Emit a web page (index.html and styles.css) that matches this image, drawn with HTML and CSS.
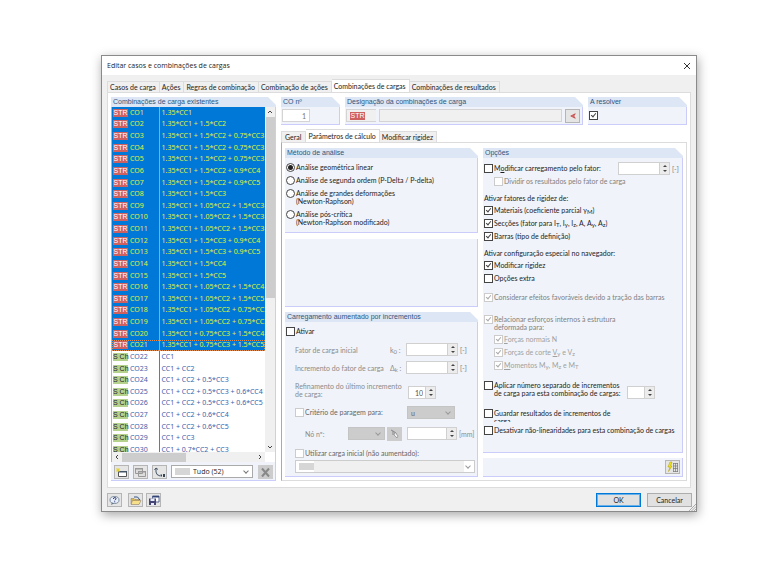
FILE: index.html
```html
<!DOCTYPE html>
<html lang="pt">
<head>
    <meta charset="UTF-8">
    <meta name="viewport" content="width=device-width, initial-scale=1.0">
    <title>Editar casos e combinações de cargas</title>
    <link rel="stylesheet" href="styles.css">
</head>
<body>

  <main class="dialog">
    <header class="titlebar">
      <h1>Editar casos e combinações de cargas</h1>
      <button type="button" class="close" aria-label="Fechar">
        <svg width="8" height="8" viewBox="0 0 8 8"><path d="M1 1l6 6M7 1l-6 6" stroke="#333" fill="none"/></svg>
      </button>
    </header>

    <nav class="tabs">
      <button type="button">Casos de carga</button>
      <button type="button">Ações</button>
      <button type="button">Regras de combinação</button>
      <button type="button">Combinação de ações</button>
      <button type="button" class="active">Combinações de cargas</button>
      <button type="button">Combinações de resultados</button>
    </nav>

    <div class="page">
      <!-- Existing combinations -->
      <section class="group existing">
        <h2>Combinações de carga existentes</h2>
        <div class="group-body">
          <div class="list">
            <div class="rows">
              <table>
                <tbody id="combinations"></tbody>
              </table>
            </div>
            <div class="scroll-v">
              <svg width="8" height="10" viewBox="0 0 8 10"><path d="M2 6l2-2 2 2" stroke="#444" fill="none"/></svg>
              <span class="thumb"></span>
              <svg width="8" height="10" viewBox="0 0 8 10"><path d="M2 4l2 2 2-2" stroke="#444" fill="none"/></svg>
            </div>
            <div class="scroll-h">
              <svg width="10" height="8" viewBox="0 0 10 8"><path d="M6 2l-2 2 2 2" stroke="#444" fill="none"/></svg>
              <span class="thumb"></span>
              <svg width="10" height="8" viewBox="0 0 10 8"><path d="M4 2l2 2-2 2" stroke="#444" fill="none"/></svg>
            </div>
          </div>
          <div class="list-tools">
            <button type="button" class="tool" aria-label="Nova">
              <svg width="13" height="11" viewBox="0 0 13 11"><path d="M3.500 4.500h8v5h-8z" fill="#fff" stroke="#555"/><path d="M4 4h8v1.500H4z" fill="#456"/><path d="M3 1v4M1 3h4M1.500 1.500l3 3M4.500 1.500l-3 3" stroke="#e2cf20" stroke-width=".8"/></svg>
            </button>
            <button type="button" class="tool" aria-label="Copiar">
              <svg width="13" height="11" viewBox="0 0 13 11"><path d="M1.500 1.500h7v5h-7zM4.500 4.500h7v5h-7z" fill="#ddd" stroke="#999"/><path d="M1 1h8v1.500H1zM4 4h8v1.500H4z" fill="#999"/></svg>
            </button>
            <button type="button" class="tool" aria-label="Renumerar">
              <svg width="13" height="11" viewBox="0 0 13 11"><path d="M3 1v4q0 3 4 4M1.500 3L3 1l2 1.500" fill="none" stroke="#456"/><path d="M7.500 7.500h1.500v2H7.500zM10 7h2v3h-2z" fill="#345"/></svg>
            </button>
            <div class="combo filter">
              <span class="swatch"></span>
              <select aria-label="Filtro"><option>Tudo (52)</option></select>
            </div>
            <button type="button" class="tool off" aria-label="Eliminar">
              <svg width="13" height="11" viewBox="0 0 13 11"><path d="M3 1.500l7 8M10 1.500l-7 8" stroke="#888" stroke-width="2"/></svg>
            </button>
          </div>
        </div>
      </section>

      <div class="detail">
        <div class="top-groups">
          <section class="group number">
            <h2><label for="coNumber">CO nº</label></h2>
            <div class="group-body"><input type="text" id="coNumber" class="field" value="1"></div>
          </section>
          <section class="group designation">
            <h2><label for="coName">Designação da combinações de carga</label></h2>
            <div class="group-body">
              <span class="type-box"><span class="badge str">STR</span></span>
              <input type="text" id="coName" class="field off">
              <button type="button" class="tool" aria-label="Escolher">
                <svg width="6" height="6" viewBox="0 0 8 8"><path d="M7 1L1 4l6 3-2-3z" fill="#e66" stroke="#b44" stroke-width="1"/></svg>
              </button>
            </div>
          </section>
          <section class="group solve">
            <h2><label for="solve">A resolver</label></h2>
            <div class="group-body"><input type="checkbox" id="solve" checked></div>
          </section>
        </div>

        <nav class="tabs inner">
          <button type="button">Geral</button>
          <button type="button" class="active">Parâmetros de cálculo</button>
          <button type="button">Modificar rigidez</button>
        </nav>

        <div class="params">
          <div class="column">
            <section class="group method">
              <h2>Método de análise</h2>
              <div class="group-body">
                <label class="option"><input type="radio" name="method" checked><span>Análise geométrica linear</span></label>
                <label class="option"><input type="radio" name="method"><span>Análise de segunda ordem (P-Delta / P-delta)</span></label>
                <label class="option"><input type="radio" name="method"><span>Análise de grandes deformações<br>(Newton-Raphson)</span></label>
                <label class="option"><input type="radio" name="method"><span>Análise pós-crítica<br>(Newton-Raphson modificado)</span></label>
              </div>
            </section>

            <section class="group blank"><div class="group-body"></div></section>

            <section class="group increments">
              <h2>Carregamento aumentado por incrementos</h2>
              <div class="group-body">
                <label class="option"><input type="checkbox"><span>Ativar</span></label>
                <div class="line">
                  <label for="initial">Fator de carga inicial</label>
                  <span class="symbol">k<sub>0</sub> :</span>
                  <span class="spin"><input type="text" id="initial"><i></i></span>
                  <span class="unit">[-]</span>
                </div>
                <div class="line">
                  <label for="step">Incremento do fator de carga</label>
                  <span class="symbol">Δ<sub>k</sub> :</span>
                  <span class="spin"><input type="text" id="step"><i></i></span>
                  <span class="unit">[-]</span>
                </div>
                <div class="line tall">
                  <label for="refine">Refinamento do último incremento<br>de carga:</label>
                  <span class="spin small"><input type="text" id="refine" value="10"><i></i></span>
                </div>
                <div class="line">
                  <label class="option dim"><input type="checkbox" disabled><span>Critério de paragem para:</span></label>
                  <div class="combo grey u"><select aria-label="Critério" disabled><option>u</option></select></div>
                </div>
                <div class="line node">
                  <label for="node">Nó nº:</label>
                  <div class="combo grey"><select id="node" disabled><option></option></select></div>
                  <button type="button" class="tool off" aria-label="Selecionar nó">
                    <svg width="12" height="10" viewBox="0 0 12 10"><path d="M2 1l2 1v4M4 2l3 2v3" fill="none" stroke="#888"/><path d="M6 3l3 4-1 2-3-3z" fill="#eee" stroke="#888" stroke-width=".7"/></svg>
                  </button>
                  <span class="spin"><input type="text" aria-label="Valor em mm"><i></i></span>
                  <span class="unit">[mm]</span>
                </div>
                <label class="option dim indent"><input type="checkbox" disabled><span>Utilizar carga inicial (não aumentado):</span></label>
                <div class="combo initial-load"><span class="swatch"></span><select aria-label="Carga inicial" disabled><option></option></select></div>
              </div>
            </section>
          </div>

          <div class="column">
            <section class="group options">
              <h2>Opções</h2>
              <div class="group-body">
                <div class="line factor">
                  <label class="option"><input type="checkbox"><span>M<u>o</u>dificar carregamento pelo fator:</span></label>
                  <span class="spin"><input type="text" aria-label="Fator"><i></i></span>
                  <span class="unit">[-]</span>
                </div>
                <label class="option sub-option off"><input type="checkbox" disabled><span>Dividir os resultados pelo fator de carga</span></label>

                <p>Ativar fatores de rigidez de:</p>
                <label class="option"><input type="checkbox" checked><span>Materiais (coeficiente parcial γ<sub>M</sub>)</span></label>
                <label class="option"><input type="checkbox" checked><span>Secções (fator para I<sub>T</sub>, I<sub>y</sub>, I<sub>z</sub>, A, A<sub>y</sub>, A<sub>z</sub>)</span></label>
                <label class="option"><input type="checkbox" checked><span>Barras (tipo de definição)</span></label>

                <p>Ativar configuração especial no navegador:</p>
                <label class="option"><input type="checkbox" checked><span>Modificar rigidez</span></label>
                <label class="option"><input type="checkbox"><span>Opções extra</span></label>

                <label class="option off spaced"><input type="checkbox" checked disabled><span>Considerar efeitos favoráveis devido a tração das barras</span></label>

                <label class="option off relate"><input type="checkbox" checked disabled><span>Relacionar esforços internos à estrutura<br>deformada para:</span></label>
                <label class="option sub-option off light"><input type="checkbox" checked disabled><span><u>F</u>orças normais N</span></label>
                <label class="option sub-option off light"><input type="checkbox" checked disabled><span>Forças de corte <u>V</u><sub>y</sub> e V<sub>z</sub></span></label>
                <label class="option sub-option off light"><input type="checkbox" checked disabled><span><u>M</u>omentos M<sub>y</sub>, M<sub>z</sub> e M<sub>T</sub></span></label>

                <div class="line separate">
                  <label class="option"><input type="checkbox"><span>Aplicar número separado de incrementos<br>de carga para esta combinação de cargas:</span></label>
                  <span class="spin small"><input type="text" aria-label="Número de incrementos"><i></i></span>
                </div>
                <label class="option cut"><input type="checkbox"><span>Guardar resultados de incrementos de<br>carga</span></label>
                <label class="option"><input type="checkbox"><span>Desativar não-linearidades para esta combinação de cargas</span></label>
              </div>
            </section>

            <section class="group details">
              <div class="group-body">
                <button type="button" class="tool" aria-label="Detalhes">
                  <svg width="13" height="12" viewBox="0 0 13 12"><path d="M4 1L2 6h2L2.500 10.500 6 5H4.500L6 1z" fill="#f4e81c" stroke="#a90" stroke-width=".5"/><path d="M7.500 2v9M7 2.500h5M7 5h5M7 7.500h5M7 10.500h5M9.500 2v9M11.500 2v9" stroke="#777" stroke-width=".7"/></svg>
                </button>
              </div>
            </section>
          </div>
        </div>
      </div>
    </div>

    <footer class="footer">
      <button type="button" class="tool" aria-label="Ajuda">
        <svg width="13" height="11" viewBox="0 0 13 11"><ellipse cx="6.500" cy="5" rx="4.500" ry="3.500" fill="#e8eefb" stroke="#678" stroke-width=".8"/><path d="M5.500 4q0-1.500 1.200-1.500T8 3.500 6.700 5.200M6.700 6.300v1" fill="none" stroke="#236"/><path d="M4 7.500L3 10l3-1.500" fill="#678"/></svg>
      </button>
      <button type="button" class="tool" aria-label="Abrir">
        <svg width="13" height="11" viewBox="0 0 13 11"><path d="M2 3.500h3l1 1h4V9H2z" fill="#d8b94a" stroke="#876" stroke-width=".5"/><path d="M3.500 5.500H12L10 9.500H2z" fill="#f6e08a" stroke="#876" stroke-width=".5"/><path d="M5 2q4-1.500 6 3" fill="none" stroke="#358"/></svg>
      </button>
      <button type="button" class="tool" aria-label="Guardar">
        <svg width="13" height="11" viewBox="0 0 13 11"><path d="M5.500 1H12v6H5.500z" fill="#fff" stroke="#347" stroke-width=".8"/><path d="M6 1h6v1.500H6z" fill="#347"/><path d="M2 3.500h7V10H2z" fill="#447"/><path d="M3.500 3.500h4V6h-4zM4 8h3v2H4z" fill="#e8ecf5"/></svg>
      </button>
      <span class="gap"></span>
      <button type="button" class="push primary">OK</button>
      <button type="button" class="push">Cancelar</button>
      <svg class="grip" width="7" height="7" viewBox="0 0 7 7"><path d="M0 7l7-7M2.500 7L7 2.500M5 7l2-2" stroke="#999" stroke-width=".8"/></svg>
    </footer>
  </main>

  <script src="script.js"></script>
</body>
</html>
```
FILE: styles.css
```css
* {
    box-sizing: border-box;
}

body {
    margin: 0;
    padding: 55px 63px 57px 101px;
    background: #fff;
    color: #1c1c1c;
    font-family: Lato, sans-serif;
    font-size: 7px;
    line-height: 8px;
}

button,
input,
select {
    margin: 0;
    padding: 0;
    border: 0;
    background: none;
    color: inherit;
    font: inherit;
}

h1,
h2,
p {
    margin: 0;
    font-size: 7px;
    font-weight: normal;
}

svg {
    display: block;
    flex: none;
}

sub {
    font-size: 6px;
    line-height: 0;
    vertical-align: -1px;
}

.dialog {
    border: 1px solid #8a8a8a;
    background: #f0f0f0;
    box-shadow: 1px 3px 10px rgba(0, 0, 0, 0.35);
}

.titlebar {
    display: flex;
    align-items: center;
    justify-content: space-between;
    height: 19px;
    padding: 0 5px;
    background: #fff;
}

.titlebar h1 {
    font-family: "Open Sans", sans-serif;
}

/* Tabs */
.tabs {
    display: flex;
    align-items: flex-end;
    height: 17px;
    margin-left: 5px;
}

.tabs button {
    height: 11px;
    padding: 0 3px 0 2px;
    border: 1px solid #dcdcdc;
    border-bottom: 0;
    border-left-width: 0;
    background: #f0f0f0;
    white-space: nowrap;
}

.tabs button:first-child {
    border-left-width: 1px;
}

.tabs .active {
    height: 13px;
    background: #fff;
}

/* Main page */
.page {
    display: flex;
    gap: 5px;
    margin: 0 5px;
    padding: 4px 3px 6px;
    border: 1px solid #dcdcdc;
    background: #fff;
}

.existing {
    width: 165px;
    flex: none;
}

.detail {
    flex: 1;
    min-width: 0;
}

/* Group boxes */
.group {
    display: flex;
    flex-direction: column;
}

.group h2 {
    height: 10px;
    padding: 1px 2px;
    background: #dce6f4;
    clip-path: polygon(0 0, calc(100% - 8px) 0, 100% 8px, 100% 100%, 0 100%);
    color: #2d5580;
    font-family: "Liberation Sans", sans-serif;
    white-space: nowrap;
}

.group-body {
    flex: 1;
    border-right: 1px solid #ccccfa;
    border-bottom: 1px solid #ccccfa;
    background: #f0f4fa;
}

/* Combination list */
.list {
    display: grid;
    grid-template-columns: 1fr 10px;
    grid-template-rows: 345px 10px;
    background: #fff;
    border-left: 1px solid #a0b8d8;
}

.rows {
    overflow: hidden;
}

table {
    width: 100%;
    height: 349px;
    border-collapse: collapse;
    table-layout: fixed;
    color: #3a5fae;
    font-family: "Noto Sans", sans-serif;
}

td {
    padding: 0 0 0 2px;
    overflow: hidden;
    white-space: nowrap;
}

td:first-child {
    width: 17px;
    padding-left: 1px;
}

td:nth-child(2) {
    width: 30px;
    padding-left: 1px;
    border-right: 1px solid #777;
}

.selected td {
    background: #0078d7;
    color: #e6ef3a;
}

.selected td:nth-child(2) {
    border-color: #6cb4ee;
}

.current {
    outline: 1px dotted #e08a50;
    outline-offset: -1px;
}

.badge {
    display: block;
    width: 15px;
    height: 8px;
    background: #b4d28c;
    color: #223;
    font-family: "Liberation Sans", sans-serif;
    line-height: 8px;
    text-align: center;
}

.badge.str {
    background: #cf6060;
    color: #fff;
}

.scroll-v,
.scroll-h {
    display: flex;
    align-items: center;
    background: #f0f0f0;
}

.scroll-v {
    flex-direction: column;
    justify-content: space-between;
}

.scroll-v .thumb {
    width: 9px;
    height: 181px;
    margin-bottom: auto;
    background: #cdcdcd;
}

.scroll-h .thumb {
    width: 64px;
    height: 9px;
    margin-right: auto;
    background: #cdcdcd;
}

.list-tools {
    display: flex;
    gap: 4px;
    padding: 3px 2px 1px 3px;
}

.list-tools .filter {
    flex: 1;
    margin-right: 1px;
}

.tool {
    display: flex;
    align-items: center;
    justify-content: center;
    flex: none;
    width: 15px;
    height: 14px;
    border: 1px solid #b5b5b5;
    background: #e5e5e5;
}

.tool.off {
    background: #cccccc;
    border-color: #cccccc;
}

/* Fields */
.field {
    height: 13px;
    border: 1px solid #d4d4d4;
    background: #fff;
}

.field.off {
    background: #f0f0f0;
}

.combo {
    display: flex;
    align-items: center;
    height: 13px;
    padding: 0 3px;
    border: 1px solid #aaa;
    background: #fff;
}

.combo::after {
    content: "";
    width: 3px;
    height: 3px;
    margin: -2px 1px 0 2px;
    border: solid #777;
    border-width: 0 1px 1px 0;
    transform: rotate(45deg);
}

.combo select {
    flex: 1;
    min-width: 0;
    appearance: none;
    opacity: 1;
}

.combo.grey {
    border-color: #c4c4c4;
    background: #cccccc;
    color: #666;
}

.combo.grey::after,
.combo.initial-load::after {
    border-color: #999;
}

.filter select {
    padding-left: 3px;
    font-family: "Open Sans", sans-serif;
}

.swatch {
    width: 15px;
    height: 7px;
    background: #d6d6d6;
}

.spin {
    display: flex;
    flex: none;
    width: 52px;
    height: 13px;
    border: 1px solid #d0d0d0;
    background: #fff;
}

.spin input {
    flex: 1;
    min-width: 0;
    padding-right: 2px;
    color: #555;
    text-align: right;
}

.spin i {
    display: flex;
    flex-direction: column;
    align-items: center;
    justify-content: space-evenly;
    width: 10px;
    border-left: 1px solid #d0d0d0;
    background: #ececec;
}

.spin i::before,
.spin i::after {
    content: "";
    border: 2px solid transparent;
}

.spin i::before {
    border-top: 0;
    border-bottom-color: #444;
}

.spin i::after {
    border-bottom: 0;
    border-top-color: #444;
}

.spin.small {
    width: 28px;
}

.unit {
    margin-left: 2px;
    color: #8a8a8a;
    font-family: "Noto Sans", sans-serif;
}

input[type="checkbox"],
input[type="radio"] {
    display: flex;
    justify-content: center;
    flex: none;
    appearance: none;
    width: 9px;
    height: 9px;
    border: 1px solid #444;
    background: #fff;
}

input[type="radio"] {
    align-items: center;
    border-radius: 50%;
}

input[type="checkbox"]:checked::after {
    content: "";
    width: 2px;
    height: 4px;
    border: solid #444;
    border-width: 0 1px 1px 0;
    transform: rotate(40deg);
}

input[type="radio"]:checked::after {
    content: "";
    width: 5px;
    height: 5px;
    border-radius: 50%;
    background: #222;
}

input[type="checkbox"]:disabled {
    border-color: #ccc;
}

input[type="checkbox"]:disabled::after {
    border-color: #aaa;
}

.option {
    display: flex;
    gap: 1px;
    padding: 2px 0;
    white-space: nowrap;
}

.dim {
    color: #666;
}

.off {
    color: #808080;
}

.light {
    color: #a0a0a0;
}

/* Top groups */
.top-groups {
    display: flex;
    gap: 5px;
    height: 28px;
}

.top-groups .group-body {
    display: flex;
    align-items: center;
    gap: 3px;
    padding: 0 2px 0 1px;
}

.number {
    width: 59px;
}

.number .field {
    width: 28px;
    padding-right: 3px;
    color: #777;
    text-align: right;
}

.designation {
    flex: 1;
}

.designation .off {
    flex: 1;
    min-width: 0;
}

.type-box {
    width: 30px;
    height: 13px;
    padding: 2px 3px;
    border: 1px solid #d4d4d4;
    border-right: 0;
    background: #f0f0f0;
}

.solve {
    width: 99px;
}

.tabs.inner {
    margin-left: 0;
}

.inner button:first-child {
    padding: 0 4px 0 3px;
}

/* Calculation parameters */
.params {
    display: grid;
    grid-template-columns: 193fr 200fr;
    gap: 5px;
    padding: 5px 3px 3px;
    border: 1px solid #dcdcdc;
    border-left-color: #aaa;
}

.column {
    display: flex;
    flex-direction: column;
    min-width: 0;
}

.method .group-body {
    padding: 3px 1px;
}

.method .option {
    padding-bottom: 2px;
}

.method .option + .option + .option {
    padding-bottom: 3px;
}

.blank {
    height: 68px;
    margin: 6px 0 5px;
}

.increments {
    flex: 1;
}

.increments > .group-body {
    padding: 3px 2px 3px 1px;
}

.line {
    display: flex;
    align-items: center;
}

.increments .line {
    height: 13px;
    margin: 5px 0 0 9px;
    color: #8a8a8a;
}

.increments .line > label:first-child {
    flex: 1;
    white-space: nowrap;
}

.symbol {
    width: 16px;
}

.increments .unit {
    width: 15px;
}

.increments .line.tall {
    align-items: flex-start;
    height: 17px;
    margin-top: 8px;
}

.tall .spin {
    margin: 4px 39px 0 0;
}

.increments .line.tall + .line {
    margin-top: 7px;
}

.increments .line .dim {
    color: #666;
}

.combo.u {
    width: 48px;
    margin-right: 20px;
}

.increments .line.node {
    gap: 2px;
    margin-top: 8px;
    padding-left: 10px;
}

.node .combo {
    width: 37px;
}

.node .spin {
    width: 50px;
    margin-left: 3px;
}

.increments .node .unit {
    width: 16px;
    margin: 0;
    font-family: Lato, sans-serif;
}

.indent {
    margin: 7px 0 0 9px;
}

.initial-load {
    margin-left: 9px;
    border-color: #ccc;
}

.initial-load select {
    align-self: stretch;
    background: #f0f0f0;
}

.options {
    flex: 1;
}

.options .group-body {
    padding: 4px 1px 14px;
}

.factor .spin {
    margin-left: auto;
}

.factor .unit {
    width: 9px;
}

.sub-option {
    margin-left: 10px;
}

.options p {
    padding: 6px 0 2px;
}

.spaced {
    margin-top: 6px;
}

.relate {
    margin-top: 9px;
}

.separate {
    align-items: flex-end;
    margin-top: 7px;
}

.separate .spin {
    margin-left: auto;
    margin-right: 26px;
}

.cut {
    height: 15px;
    margin: 8px 0 2px;
    overflow: hidden;
}

.details {
    margin-top: 5px;
}

.details .group-body {
    display: flex;
    justify-content: flex-end;
    padding: 2px;
}

/* Footer */
.footer {
    display: flex;
    align-items: center;
    gap: 6px;
    position: relative;
    padding: 5px 4px 4px 5px;
}

.footer .tool:nth-child(3) {
    margin-left: -3px;
}

.gap {
    flex: 1;
}

.push {
    width: 45px;
    height: 14px;
    border: 1px solid #adadad;
    background: #e1e1e1;
}

.push.primary {
    border: 1px solid #0078d7;
    box-shadow: inset 0 0 0 1px #6ab0e8;
}

.grip {
    position: absolute;
    right: 0;
    bottom: 0;
}
```
FILE: script.js
```js
const combinations = [
  '1.35*CC1',
  '1.35*CC1 + 1.5*CC2',
  '1.35*CC1 + 1.5*CC2 + 0.75*CC3',
  '1.35*CC1 + 1.5*CC2 + 0.75*CC3',
  '1.35*CC1 + 1.5*CC2 + 0.75*CC3',
  '1.35*CC1 + 1.5*CC2 + 0.9*CC4',
  '1.35*CC1 + 1.5*CC2 + 0.9*CC5',
  '1.35*CC1 + 1.5*CC3',
  '1.35*CC1 + 1.05*CC2 + 1.5*CC3',
  '1.35*CC1 + 1.05*CC2 + 1.5*CC3',
  '1.35*CC1 + 1.05*CC2 + 1.5*CC3',
  '1.35*CC1 + 1.5*CC3 + 0.9*CC4',
  '1.35*CC1 + 1.5*CC3 + 0.9*CC5',
  '1.35*CC1 + 1.5*CC4',
  '1.35*CC1 + 1.5*CC5',
  '1.35*CC1 + 1.05*CC2 + 1.5*CC4',
  '1.35*CC1 + 1.05*CC2 + 1.5*CC5',
  '1.35*CC1 + 1.05*CC2 + 0.75*CC3',
  '1.35*CC1 + 1.05*CC2 + 0.75*CC3',
  '1.35*CC1 + 0.75*CC3 + 1.5*CC4',
  '1.35*CC1 + 0.75*CC3 + 1.5*CC5',
  'CC1',
  'CC1 + CC2',
  'CC1 + CC2 + 0.5*CC3',
  'CC1 + CC2 + 0.5*CC3 + 0.6*CC4',
  'CC1 + CC2 + 0.5*CC3 + 0.6*CC5',
  'CC1 + CC2 + 0.6*CC4',
  'CC1 + CC2 + 0.6*CC5',
  'CC1 + CC3',
  'CC1 + 0.7*CC2 + CC3'
];

const ultimateCount = 21;

document.getElementById('combinations').innerHTML = combinations.map((formula, i) => {
  const ultimate = i < ultimateCount;
  const rowClass = ultimate ? (i === ultimateCount - 1 ? 'selected current' : 'selected') : '';
  const badge = ultimate ? '<span class="badge str">STR</span>' : '<span class="badge">S Ch</span>';
  return `<tr class="${rowClass}"><td>${badge}</td><td>CO${i + 1}</td><td>${formula}</td></tr>`;
}).join('');
```
